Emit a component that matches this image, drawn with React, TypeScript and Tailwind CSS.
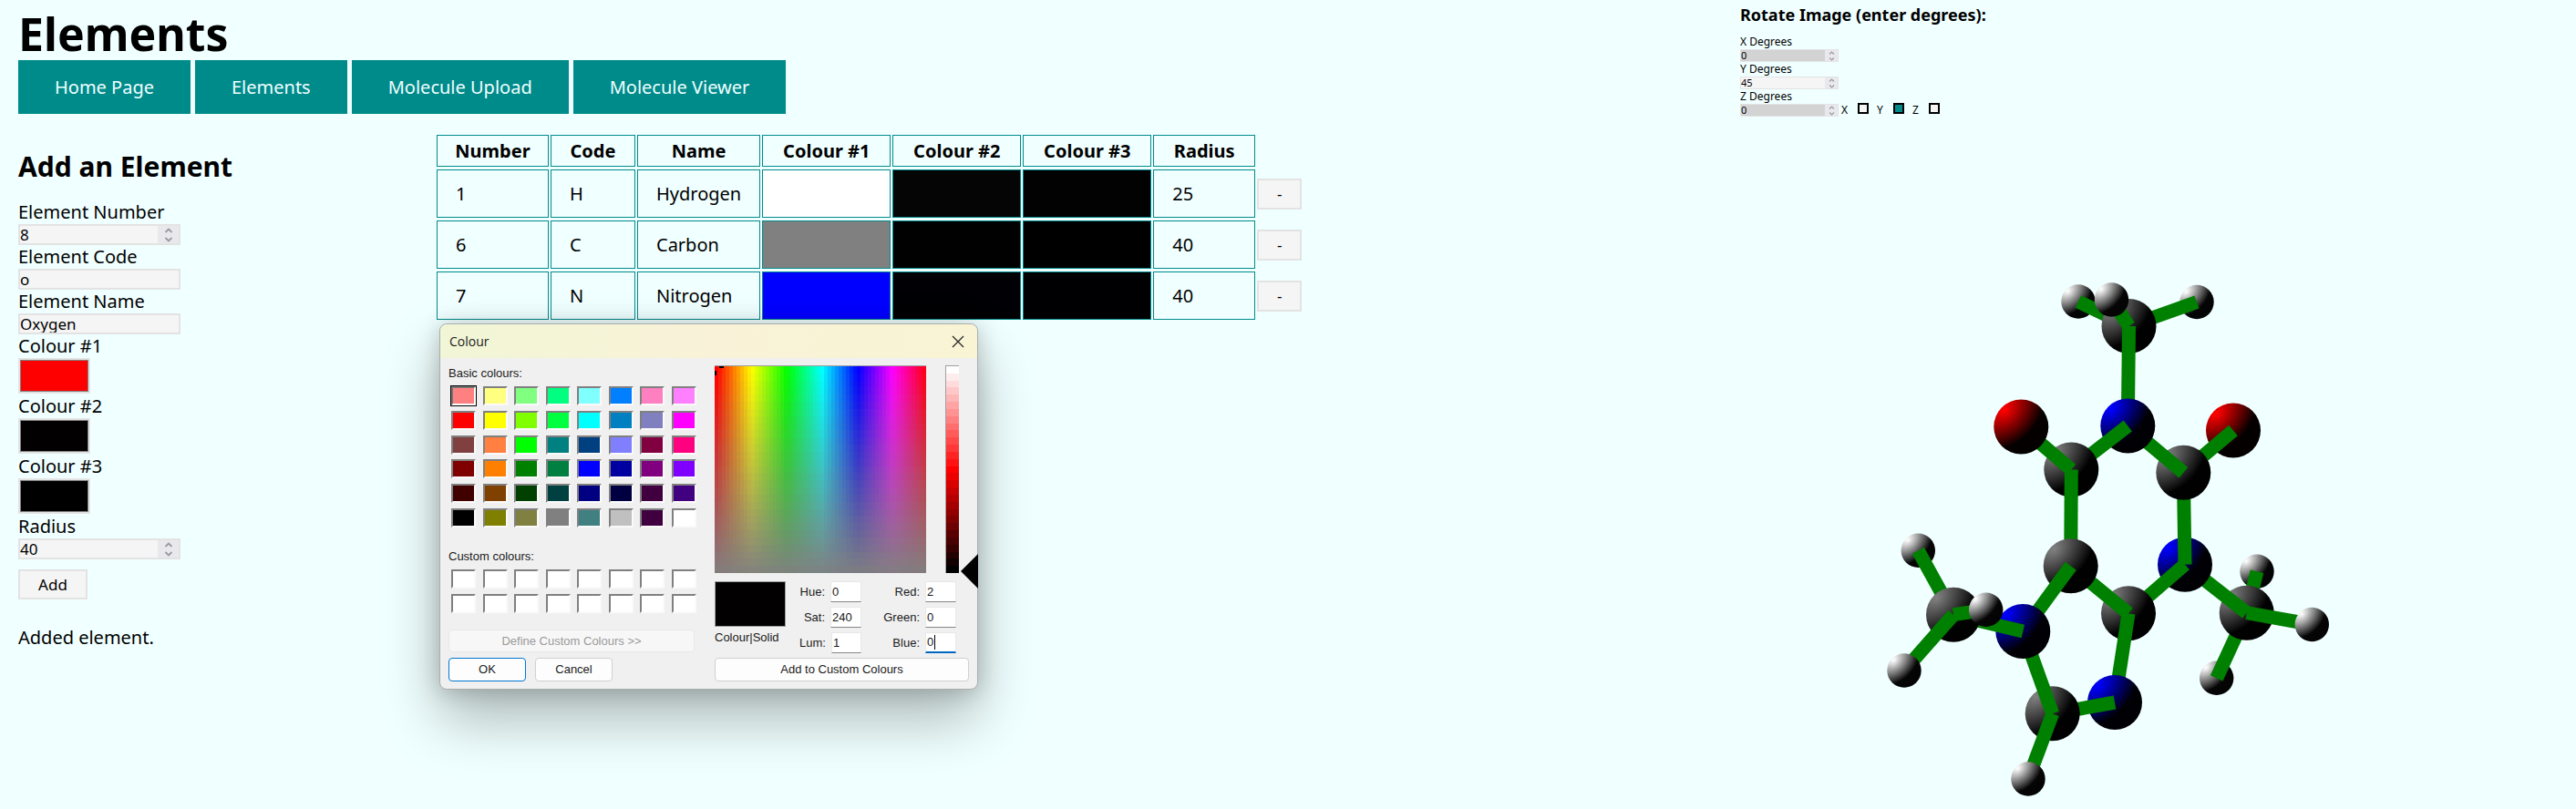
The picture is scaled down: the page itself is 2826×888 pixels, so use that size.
import { useId } from "react";

type Kind = "H" | "C" | "N" | "O";
type Atom = { id: string; kind: Kind; x: number; y: number; bonds: string[] };

const shades: Record<Kind, [string, string, string]> = {
  H: ["#ffffff", "#050505", "#020202"],
  C: ["#808080", "#010101", "#000000"],
  N: ["#0000ff", "#000005", "#000002"],
  O: ["#ff0000", "#050000", "#020000"],
};

const radii: Record<Kind, number> = { H: 18.7, C: 30, N: 30, O: 30 };

/* Sorted from back to front; each atom lists the bonds drawn just above it. */
const atoms: Atom[] = [
  { id: "o2", kind: "O", x: 2450, y: 472.5, bonds: ["c3"] },
  { id: "h1", kind: "H", x: 2280, y: 331, bonds: ["c1"] },
  { id: "h3", kind: "H", x: 2410, y: 331.5, bonds: ["c1"] },
  { id: "c1", kind: "C", x: 2335.5, y: 358, bonds: ["h2", "n1"] },
  { id: "h2", kind: "H", x: 2316.5, y: 329, bonds: [] },
  { id: "h4", kind: "H", x: 2476, y: 627.3, bonds: ["c6"] },
  { id: "h6", kind: "H", x: 2431.7, y: 744.3, bonds: ["c6"] },
  { id: "c6", kind: "C", x: 2464.7, y: 672.7, bonds: ["n2", "h5"] },
  { id: "h5", kind: "H", x: 2536.3, y: 685.5, bonds: [] },
  { id: "n2", kind: "N", x: 2397, y: 619.7, bonds: ["c3", "c5"] },
  { id: "c5", kind: "C", x: 2335, y: 673.3, bonds: ["c4", "n4"] },
  { id: "c3", kind: "C", x: 2395.3, y: 518.7, bonds: ["n1"] },
  { id: "n1", kind: "N", x: 2334.3, y: 467.5, bonds: ["c2"] },
  { id: "c2", kind: "C", x: 2272.3, y: 515.5, bonds: ["o1", "c4"] },
  { id: "o1", kind: "O", x: 2217.3, y: 468.5, bonds: [] },
  { id: "n4", kind: "N", x: 2320, y: 771, bonds: ["c8"] },
  { id: "c8", kind: "C", x: 2251.7, y: 783.3, bonds: ["n3", "h10"] },
  { id: "h10", kind: "H", x: 2225, y: 855, bonds: [] },
  { id: "c4", kind: "C", x: 2271.7, y: 621.3, bonds: ["n3"] },
  { id: "n3", kind: "N", x: 2219.3, y: 693, bonds: ["c7"] },
  { id: "h7", kind: "H", x: 2104.3, y: 604.3, bonds: ["c7"] },
  { id: "c7", kind: "C", x: 2143, y: 674.7, bonds: ["h8", "h9"] },
  { id: "h8", kind: "H", x: 2178.7, y: 669.3, bonds: [] },
  { id: "h9", kind: "H", x: 2089, y: 736, bonds: [] },
];

function Molecule() {
  const find = (id: string) => atoms.find((a) => a.id === id)!;
  return (
    <svg viewBox="1909 137 917 751" className="block h-auto w-full" role="img" aria-label="Molecule">
      <defs>
        {(Object.keys(shades) as Kind[]).map((k) => (
          <radialGradient key={k} id={`atom-${k}`} cx="-50%" cy="-50%" r="220%" fx="20%" fy="20%">
            <stop offset="0%" stopColor={shades[k][0]} />
            <stop offset="50%" stopColor={shades[k][1]} />
            <stop offset="100%" stopColor={shades[k][2]} />
          </radialGradient>
        ))}
      </defs>
      {atoms.map((a) => (
        <g key={a.id}>
          <circle cx={a.x} cy={a.y} r={radii[a.kind]} fill={`url(#atom-${a.kind})`} />
          {a.bonds.map((b) => {
            const to = find(b);
            return <line key={b} x1={a.x} y1={a.y} x2={to.x} y2={to.y} stroke="#008000" strokeWidth="15" />;
          })}
        </g>
      ))}
    </svg>
  );
}

const navLinks = ["Home Page", "Elements", "Molecule Upload", "Molecule Viewer"];

const rows = [
  { number: 1, code: "H", name: "Hydrogen", colours: ["#ffffff", "#050505", "#020202"], radius: 25 },
  { number: 6, code: "C", name: "Carbon", colours: ["#808080", "#010101", "#000000"], radius: 40 },
  { number: 7, code: "N", name: "Nitrogen", colours: ["#0000ff", "#000005", "#000002"], radius: 40 },
];

function Chevrons({ small }: { small?: boolean }) {
  return (
    <svg viewBox="0 0 10 16" aria-hidden="true" className={small ? "h-[11px] w-[7px]" : "h-4 w-[10px]"}>
      <path d="M1.5 5 5 1.5 8.5 5M1.5 11 5 14.5 8.5 11" fill="none" stroke="#9a99a3" strokeWidth="1.8" />
    </svg>
  );
}

function TextField({ label, value, number }: { label: string; value: string; number?: boolean }) {
  const id = useId();
  return (
    <div className="flex flex-col">
      <label htmlFor={id} className="leading-[26px]">{label}</label>
      <div className="flex h-[23px] w-[178px] border-2 border-[#e3e3e3] bg-[#f5f5f5]">
        <input id={id} type="text" inputMode={number ? "numeric" : "text"} defaultValue={value} className="min-w-0 flex-1 bg-transparent text-[17px] leading-[19px] outline-none" />
        {number && (
          <span className="flex w-[23px] items-center justify-center bg-[#e9e9ed]">
            <Chevrons />
          </span>
        )}
      </div>
    </div>
  );
}

function ColourField({ label, value }: { label: string; value: string }) {
  const id = useId();
  return (
    <div className="flex flex-col pb-px">
      <label htmlFor={id} className="leading-[26px]">{label}</label>
      <input
        id={id}
        type="color"
        defaultValue={value}
        className="h-[39px] w-[79px] appearance-none border-2 border-[#e3e3e3] bg-[#f5f5f5] p-0 [&::-webkit-color-swatch-wrapper]:p-0 [&::-webkit-color-swatch]:rounded-none [&::-webkit-color-swatch]:border [&::-webkit-color-swatch]:border-[#808080]"
      />
    </div>
  );
}

function DegreeField({ label, value, off }: { label: string; value: string; off?: boolean }) {
  const id = useId();
  return (
    <div className="flex flex-col">
      <label htmlFor={id} className="text-xs leading-4">{label}</label>
      <div className={off ? "flex h-[14px] w-[108px] border border-[#e3e3e3] bg-[#d3d3d3]" : "flex h-[14px] w-[108px] border border-[#e3e3e3] bg-[#f5f5f5]"}>
        <input id={id} type="text" inputMode="numeric" defaultValue={value} disabled={off} className="min-w-0 flex-1 bg-transparent text-[11px] leading-3 outline-none" />
        <span className="flex w-[14px] items-center justify-center bg-[#e9e9ed]">
          <Chevrons small />
        </span>
      </div>
    </div>
  );
}

function AxisBox({ label, on }: { label: string; on?: boolean }) {
  return (
    <label className="flex h-[14px] items-start">
      <span className="w-[18px] text-xs leading-[14px]">{label}</span>
      <input type="checkbox" defaultChecked={on} className="-mt-px size-3 appearance-none border-2 border-black bg-[#f5f5f5] checked:bg-[#008b8b]" />
    </label>
  );
}

const basicColours = [
  "#ff8080", "#ffff80", "#80ff80", "#00ff80", "#80ffff", "#0080ff", "#ff80c0", "#ff80ff",
  "#ff0000", "#ffff00", "#80ff00", "#00ff40", "#00ffff", "#0080c0", "#8080c0", "#ff00ff",
  "#804040", "#ff8040", "#00ff00", "#008080", "#004080", "#8080ff", "#800040", "#ff0080",
  "#800000", "#ff8000", "#008000", "#008040", "#0000ff", "#0000a0", "#800080", "#8000ff",
  "#400000", "#804000", "#004000", "#004040", "#000080", "#000040", "#400040", "#400080",
  "#000000", "#808000", "#808040", "#808080", "#408080", "#c0c0c0", "#400040", "#ffffff",
];

function Swatch({ colour, name, selected }: { colour: string; name: string; selected?: boolean }) {
  return (
    <button
      type="button"
      aria-label={name}
      className={
        selected
          ? "h-[21px] w-[27px] border-2 border-t-[#777] border-r-white border-b-white border-l-[#777] outline-1 outline-black"
          : "h-[21px] w-[27px] border-2 border-t-[#808080] border-r-[#fafafa] border-b-[#fafafa] border-l-[#808080]"
      }
      style={{ backgroundColor: colour }}
    />
  );
}

function Channel({ label, value, focused }: { label: string; value: string; focused?: boolean }) {
  const id = useId();
  return (
    <div className="flex items-center justify-end gap-[6px]">
      <label htmlFor={id}>{label}</label>
      <div className={focused ? "flex h-[23px] w-[34px] items-center border border-b-2 border-[#e8e8e8] border-b-[#0067c0] bg-white" : "flex h-[23px] w-[34px] items-center border border-[#e8e8e8] border-b-[#868686] bg-white"}>
        <input
          id={id}
          type="text"
          defaultValue={value}
          className={focused ? "w-[9px] bg-transparent pl-px outline-none" : "w-full bg-transparent pl-px outline-none"}
        />
        {focused && <span aria-hidden="true" className="h-4 w-px bg-black" />}
      </div>
    </div>
  );
}

function ColourDialog() {
  const hues = Array.from({ length: 58 }, (_, i) => i * (360 / 58));
  const steps = Array.from({ length: 29 }, (_, i) => i);
  const button = "h-[26px] rounded-[4px] border border-[#d0d0d0] bg-[#fdfdfd]";
  return (
    <div
      role="dialog"
      aria-label="Colour"
      className="absolute top-[355px] left-[482px] w-[591px] rounded-lg border border-[#a9b0ad] bg-[#f0f0f0] font-['Liberation_Sans',sans-serif] text-[13px] leading-4 text-[#1a1a1a] shadow-[0_32px_64px_rgba(0,0,0,0.28),0_2px_24px_rgba(0,0,0,0.2)]"
    >
      <header className="flex h-[37px] items-center justify-between rounded-t-lg bg-linear-to-r from-[#f1f6d6] via-[#f9f2d8] to-[#f9f4d4] pr-[14px] pl-[10px] font-['Open_Sans',sans-serif] text-[14px]">
        <span>Colour</span>
        <button type="button" aria-label="Close">
          <svg viewBox="0 0 14 14" className="size-[14px]">
            <path d="M1 1 13 13M13 1 1 13" stroke="#222" strokeWidth="1.2" />
          </svg>
        </button>
      </header>
      <div className="flex gap-[22px] pt-2 pb-2 pl-[9px]">
        <div className="flex w-[270px] flex-col">
          <p className="mt-px mb-[6px]">Basic colours:</p>
          <div className="ml-[3px] grid h-[155px] w-[269px] grid-cols-[repeat(8,27px)] content-between justify-between">
            {basicColours.map((c, i) => (
              <Swatch key={i} colour={c} name={`Basic colour ${i + 1}`} selected={i === 0} />
            ))}
          </div>
          <p className="mt-6 mb-[6px]">Custom colours:</p>
          <div className="ml-[3px] grid h-12 w-[269px] grid-cols-[repeat(8,27px)] content-between justify-between">
            {Array.from({ length: 16 }, (_, i) => (
              <Swatch key={i} colour="#ffffff" name={`Custom colour ${i + 1}`} />
            ))}
          </div>
          <button type="button" disabled className="mt-[18px] h-[25px] rounded-[4px] border border-[#e8e8e8] bg-[#f7f7f7] text-[#9a9a9a]">
            Define Custom Colours &gt;&gt;
          </button>
          <div className="mt-[6px] flex gap-[10px]">
            <button type="button" className="h-[26px] w-[85px] rounded-[4px] border border-[#0078d4] bg-[#fdfdfd]">OK</button>
            <button type="button" className={`${button} w-[85px]`}>Cancel</button>
          </div>
        </div>
        <div className="flex w-[289px] flex-col">
          <div className="flex h-[228px]">
            <div className="relative flex w-[232px] overflow-hidden border-t border-[#a0a0a0]">
              {hues.map((h) => (
                <span key={h} className="flex-1" style={{ backgroundColor: `hsl(${h} 100% 50%)` }} />
              ))}
              <div className="absolute inset-0 flex flex-col">
                {steps.map((s) => (
                  <span key={s} className="flex-1 bg-[#808080]" style={{ opacity: s / 29 }} />
                ))}
              </div>
              <span className="absolute top-[5px] left-0 h-[5px] w-[2px] bg-black" />
              <span className="absolute top-0 left-[5px] h-[2px] w-[5px] bg-black" />
            </div>
            <div className="ml-[21px] flex w-[15px] flex-col border-t border-l border-[#a0a0a0]">
              {steps.map((s) => (
                <span key={s} className="flex-1" style={{ backgroundColor: `hsl(0 100% ${100 - (s * 100) / 28}%)` }} />
              ))}
            </div>
            <svg viewBox="0 0 19 38" className="mt-[207px] ml-[2px] h-[38px] w-[19px] shrink-0" aria-hidden="true">
              <path d="M0 19 19 0V38Z" fill="#000" />
            </svg>
          </div>
          <div className="mt-[9px] flex w-[265px]">
            <div className="flex flex-col gap-[4px]">
              <div className="h-[50px] w-[78px] border border-[#a0a0a0] bg-[#020000]" />
              <span>Colour|Solid</span>
            </div>
            <div className="ml-[15px] flex w-[68px] flex-col gap-[5px]">
              <Channel label="Hue:" value="0" />
              <Channel label="Sat:" value="240" />
              <Channel label="Lum:" value="1" />
            </div>
            <div className="ml-auto flex w-[80px] flex-col gap-[5px]">
              <Channel label="Red:" value="2" />
              <Channel label="Green:" value="0" />
              <Channel label="Blue:" value="0" focused />
            </div>
          </div>
          <button type="button" className={`${button} mt-[5px] w-[279px]`}>Add to Custom Colours</button>
        </div>
      </div>
    </div>
  );
}

export default function App() {
  const cell = "border border-[#008b8b]";
  return (
    <div className="relative grid min-h-screen grid-cols-[1909fr_917fr] bg-[#f0ffff] font-['Noto_Sans',sans-serif] text-xl leading-6 text-black">
      <main className="px-5 pt-2">
        <h1 className="text-[50px] leading-[58px] font-bold">Elements</h1>
        <nav className="flex gap-[5px]">
          {navLinks.map((n) => (
            <a key={n} href="#" className="bg-[#008b8b] px-10 py-[18px] leading-[23px] text-[#f0ffff]">{n}</a>
          ))}
        </nav>
        <div className="flex items-start">
          <form className="w-[457px] shrink-0 pt-[38px]">
            <h2 className="mb-[17px] text-[30px] leading-10 font-bold">Add an Element</h2>
            <TextField label="Element Number" value="8" number />
            <TextField label="Element Code" value="o" />
            <TextField label="Element Name" value="Oxygen" />
            <ColourField label="Colour #1" value="#ff0000" />
            <ColourField label="Colour #2" value="#020000" />
            <ColourField label="Colour #3" value="#000000" />
            <TextField label="Radius" value="40" number />
            <button type="button" className="mt-[11px] block h-[33px] w-[76px] border-2 border-[#e3e3e3] bg-[#f5f5f5] text-[17px]">Add</button>
            <p className="mt-7 leading-7">Added element.</p>
          </form>
          <table className="mt-5 border-separate border-spacing-x-[2px] border-spacing-y-[3px]">
            <thead>
              <tr className="h-[35px]">
                <th className={`${cell} w-[123px]`}>Number</th>
                <th className={`${cell} w-[93px]`}>Code</th>
                <th className={`${cell} w-[135px]`}>Name</th>
                <th className={`${cell} w-[141px]`}>Colour #1</th>
                <th className={`${cell} w-[141px]`}>Colour #2</th>
                <th className={`${cell} w-[141px]`}>Colour #3</th>
                <th className={`${cell} w-[112px]`}>Radius</th>
                <td />
              </tr>
            </thead>
            <tbody>
              {rows.map((r) => (
                <tr key={r.code} className="h-[53px]">
                  <td className={`${cell} px-5`}>{r.number}</td>
                  <td className={`${cell} px-5`}>{r.code}</td>
                  <td className={`${cell} px-5`}>{r.name}</td>
                  {r.colours.map((c) => (
                    <td key={c} className={cell} style={{ backgroundColor: c }} />
                  ))}
                  <td className={`${cell} px-5`}>{r.radius}</td>
                  <td>
                    <button type="button" aria-label={`Remove ${r.name}`} className="block h-[34px] w-[49px] border-2 border-[#e3e3e3] bg-[#f5f5f5] text-[17px] leading-7">-</button>
                  </td>
                </tr>
              ))}
            </tbody>
          </table>
        </div>
      </main>
      <aside className="flex flex-col">
        <h3 className="pt-1 text-lg leading-6 font-bold">Rotate Image (enter degrees):</h3>
        <div className="mt-[10px] flex flex-col">
          <DegreeField label="X Degrees" value="0" off />
          <DegreeField label="Y Degrees" value="45" />
          <div className="flex items-end gap-[3px]">
            <DegreeField label="Z Degrees" value="0" off />
            <div className="flex gap-[9px]">
              <AxisBox label="X" />
              <AxisBox label="Y" on />
              <AxisBox label="Z" />
            </div>
          </div>
        </div>
        <div className="mt-auto">
          <Molecule />
        </div>
      </aside>
      <ColourDialog />
    </div>
  );
}
